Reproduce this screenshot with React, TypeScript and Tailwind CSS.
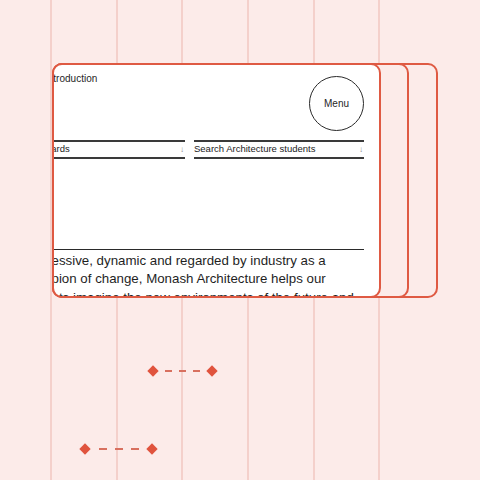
import React from "react";

const font = { fontFamily: "'Liberation Sans', Arial, sans-serif" };

function Diamond() {
  return (
    <div className="w-[11px] h-[11px] flex items-center justify-center">
      <div className="w-[8px] h-[8px] rotate-45 bg-[#e0533d]" />
    </div>
  );
}

function Connector({ wide }: { wide?: boolean }) {
  const dash = wide ? "w-[8px] h-[2px] bg-[#d8705f]" : "w-[7px] h-[2px] bg-[#d8705f]";
  return (
    <div className={wide ? "flex items-center gap-[8px]" : "flex items-center gap-[6.75px]"}>
      <Diamond />
      <div className={dash} />
      <div className={dash} />
      <div className={dash} />
      <Diamond />
    </div>
  );
}

function Field({ label, shift }: { label: string; shift?: boolean }) {
  return (
    <div className="w-[170px] h-[19px] border-y-2 border-[#3a3a3a] flex items-center justify-between text-[9.5px] text-[#222]">
      <span className={shift ? "ml-[-9px]" : ""}>{label}</span>
      <span className="text-[8px] text-[#8a8a8a] pr-[1px]">↓</span>
    </div>
  );
}

export default function App() {
  return (
    <div className="relative w-[480px] h-[480px] bg-[#fcebe9] overflow-hidden" style={font}>
      <div className="absolute inset-0 flex pl-[50px]">
        {[0, 1, 2, 3, 4, 5].map((i) => (
          <div key={i} className="w-[65.67px] h-full border-l-2 border-[#f4d0cb]" />
        ))}
      </div>

      <div className="absolute left-[52px] top-[63px] w-[386px] h-[235px]">
        <div className="absolute inset-0 rounded-[10px] border-2 border-[#df5a43] bg-[#fcebe9]" />
        <div className="absolute left-0 top-0 bottom-0 w-[357px] rounded-[10px] border-2 border-[#df5a43] bg-[#fcebe9]" />
        <div className="absolute left-0 top-0 bottom-0 w-[329px] rounded-[10px] border-2 border-[#df5a43] bg-white overflow-hidden">
          <div className="ml-[-39px] mr-[15px] flex flex-col text-[#1f1f1f]">
            <div className="flex justify-between items-start pt-[5px]">
              <div className="text-[10px] leading-[15px] ml-[30px] mt-[1px]">Introduction</div>
              <div className="mt-[6px] w-[55px] h-[55px] rounded-full border-[1.5px] border-[#2a2a2a] flex items-center justify-center text-[10px]">
                Menu
              </div>
            </div>
            <div className="flex justify-end gap-[9px] mt-[9px]">
              <Field label="Search Awards" shift />
              <Field label="Search Architecture students" />
            </div>
            <div className="h-[90px]" />
            <div className="border-t-[1.5px] border-[#2a2a2a] pt-[1.5px] pl-[4px] text-[13.3px] leading-[18.5px]">
              Progressive, dynamic and regarded by industry as a champion of change, Monash Architecture helps our students imagine the new environments of the future and
            </div>
          </div>
        </div>
      </div>

      <div className="absolute left-[147.5px] top-[365.5px]">
        <Connector />
      </div>
      <div className="absolute left-[79.5px] top-[443.5px]">
        <Connector wide />
      </div>
    </div>
  );
}
